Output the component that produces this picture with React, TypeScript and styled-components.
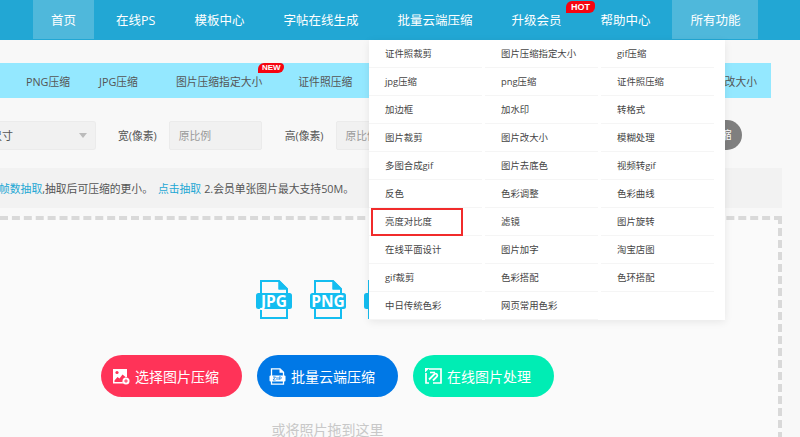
import { createGlobalStyle, styled } from "styled-components";

const GlobalStyle = createGlobalStyle`
  html, body {
    margin: 0;
    padding: 0;
    background: #f8f8f8;
  }
  body {
    font-family: "Open Sans", "Noto Sans CJK SC", sans-serif;
  }
`;

const Page = styled.div`
  position: relative;
  width: 800px;
  height: 437px;
  overflow: hidden;
  background: #f8f8f8;
`;

const Nav = styled.nav`
  display: flex;
  height: 40px;
  padding-left: 30.5px;
  background: #22a7d4;
`;

const NavItem = styled.div<{ $active?: boolean }>`
  position: relative;
  display: flex;
  align-items: center;
  justify-content: center;
  height: 39px;
  margin: 0 ${(p) => (p.$active ? "2.5px" : "0")};
  padding: 0 ${(p) => (p.$active ? "18px" : "19.5px")};
  color: #fff;
  font-size: 12.5px;
  white-space: nowrap;
  background: ${(p) => (p.$active ? "#4fb8db" : "transparent")};
`;

const Badge = styled.span<{ $hot?: boolean }>`
  position: absolute;
  top: ${(p) => (p.$hot ? "1px" : "-10px")};
  right: ${(p) => (p.$hot ? "-14px" : "-22px")};
  width: ${(p) => (p.$hot ? "29px" : "26px")};
  height: ${(p) => (p.$hot ? "12px" : "10px")};
  line-height: ${(p) => (p.$hot ? "12px" : "10px")};
  text-align: center;
  font-family: "Liberation Sans", sans-serif;
  font-size: ${(p) => (p.$hot ? "9px" : "8px")};
  font-weight: 700;
  color: #fff;
  background: #f60410;
  border-radius: 6px 4px 6px 0;
`;

const SubNav = styled.div`
  display: flex;
  align-items: center;
  width: 771px;
  height: 35px;
  margin-top: 23px;
  padding-left: 26px;
  box-sizing: border-box;
  background: #94e8ff;
`;

const SubItem = styled.span<{ $gap?: number; $end?: boolean }>`
  position: relative;
  margin-right: ${(p) => (p.$gap ?? 36)}px;
  margin-left: ${(p) => (p.$end ? "auto" : "0")};
  color: #555;
  font-size: 10.8px;
  white-space: nowrap;
`;

const FormRow = styled.div`
  display: flex;
  align-items: center;
  height: 30px;
  margin-top: 22px;
`;

const Select = styled.div`
  display: flex;
  flex: none;
  align-items: center;
  justify-content: flex-end;
  width: 96px;
  height: 29px;
  padding-right: 8px;
  box-sizing: border-box;
  overflow: hidden;
  color: #555;
  font-size: 11px;
  white-space: nowrap;
  background: #f1f1f1;
  border: 1px solid #ebebeb;
  border-left: 0;
  border-radius: 0 3px 3px 0;
`;

const SelectText = styled.span`
  flex: none;
  margin-right: 66px;
`;

const Arrow = styled.i`
  flex: none;
  width: 0;
  height: 0;
  border-top: 5px solid #bbb;
  border-left: 4px solid transparent;
  border-right: 4px solid transparent;
`;

const FieldLabel = styled.span<{ $left: number }>`
  flex: none;
  margin-left: ${(p) => p.$left}px;
  margin-right: 12px;
  color: #555;
  font-size: 10.8px;
  white-space: nowrap;
`;

const Input = styled.div`
  flex: none;
  width: 93px;
  height: 29px;
  padding-left: 9px;
  box-sizing: border-box;
  line-height: 27px;
  color: #999;
  font-size: 10.8px;
  background: #f1f1f1;
  border: 1px solid #ebebeb;
  border-radius: 2px;
`;

const StartButton = styled.div`
  flex: none;
  width: 70px;
  height: 30px;
  margin-left: 243px;
  padding-right: 10px;
  box-sizing: border-box;
  line-height: 30px;
  text-align: right;
  color: #fff;
  font-size: 10.8px;
  background: #7f7f7f;
  border-radius: 15px;
`;

const Notice = styled.div`
  display: flex;
  align-items: center;
  justify-content: flex-end;
  width: 782px;
  height: 40px;
  margin-top: 18px;
  padding-right: 428px;
  box-sizing: border-box;
  overflow: hidden;
  color: #555;
  font-size: 10.8px;
  white-space: nowrap;
  background: #f2f2f2;
`;

const NoticeText = styled.span`
  flex: none;
`;

const NoticeLink = styled.span<{ $gap?: boolean }>`
  margin: 0 ${(p) => (p.$gap ? "3px" : "0")} 0 ${(p) => (p.$gap ? "5px" : "0")};
  color: #22a7d4;
`;

const DropZone = styled.div`
  width: 782px;
  height: 260px;
  margin-top: 8px;
  padding: 59px 123px 0 0;
  box-sizing: border-box;
  background: #fafafa;
  border: 4px dashed #d9d9d9;
  border-left: 0;
  border-bottom: 0;
  display: flex;
  flex-direction: column;
  align-items: center;
`;

const FileRow = styled.div`
  display: flex;
  gap: 18px;
  height: 41px;
  margin-left: 1px;
`;

const ButtonRow = styled.div`
  display: flex;
  gap: 15px;
  margin-top: 35px;
`;

const ActionButton = styled.div<{ $color: string }>`
  display: flex;
  align-items: center;
  width: 141px;
  height: 42px;
  padding-left: 12px;
  box-sizing: border-box;
  color: #fff;
  font-size: 14px;
  white-space: nowrap;
  background: ${(p) => p.$color};
  border-radius: 21px;

  svg {
    flex: none;
    margin-right: 5px;
  }
`;

const DropHint = styled.div`
  margin-top: 23px;
  color: #c8c8c8;
  font-size: 14px;
  line-height: 20px;
`;

const Menu = styled.div`
  position: absolute;
  top: 40px;
  left: 369px;
  display: grid;
  grid-template-columns: repeat(3, 113px);
  column-gap: 3px;
  width: 356px;
  height: 280px;
  box-sizing: border-box;
  background: #fff;
  box-shadow: 0 2px 8px rgba(0, 0, 0, 0.08);
`;

const MenuItem = styled.div<{ $empty?: boolean }>`
  position: relative;
  height: 28px;
  padding-left: 16px;
  box-sizing: border-box;
  line-height: 27px;
  color: #444;
  font-size: 9.4px;
  white-space: nowrap;
  border-bottom: ${(p) => (p.$empty ? "0" : "1px solid #f5f5f5")};
`;

const Highlight = styled.span`
  position: absolute;
  top: 0;
  left: 2px;
  width: 92px;
  height: 28px;
  box-sizing: border-box;
  border: 2px solid #f12b2b;
`;

const navItems = ["在线PS", "模板中心", "字帖在线生成", "批量云端压缩"];

const menuItems = [
  "证件照裁剪", "图片压缩指定大小", "gif压缩",
  "jpg压缩", "png压缩", "证件照压缩",
  "加边框", "加水印", "转格式",
  "图片裁剪", "图片改大小", "模糊处理",
  "多图合成gif", "图片去底色", "视频转gif",
  "反色", "色彩调整", "色彩曲线",
  "亮度对比度", "滤镜", "图片旋转",
  "在线平面设计", "图片加字", "淘宝店图",
  "gif裁剪", "色彩搭配", "色环搭配",
  "中日传统色彩", "网页常用色彩", "",
];

const FileIcon = ({ label }: { label: string }) => (
  <svg width="36" height="41" viewBox="0 0 36 41">
    <path d="M5 14V2h18l8 8v4M5 29v10h26V29" fill="none" stroke="#14bdf0" strokeWidth="2" />
    <path d="M23 2v8h8z" fill="#14bdf0" stroke="#14bdf0" strokeWidth="1.5" strokeLinejoin="round" />
    <rect x="0" y="14" width="36" height="16" rx="2.5" fill="#14bdf0" />
    <text
      x="18"
      y="27.5"
      textAnchor="middle"
      fontFamily="'Open Sans', sans-serif"
      fontSize="15.5"
      fontWeight="700"
      fill="#fff"
    >
      {label}
    </text>
  </svg>
);

const PictureIcon = () => (
  <svg width="17" height="17" viewBox="0 0 17 17">
    <path d="M0 1h14v8a4.5 4.5 0 0 0-4 6.5H0z" fill="#fff" />
    <circle cx="4" cy="4.5" r="1.6" fill="#ff3358" />
    <path d="M1.5 12.5l3-3.5 2 1.5 3-4 3 2.5-2.5 3.5-.5 1.5H1.5z" fill="#ff3358" />
    <circle cx="13" cy="13" r="3.5" fill="#fff" />
    <path d="M11.2 13h3.6M13 11.2v3.6" stroke="#ff3358" strokeWidth="1" />
  </svg>
);

const ZipIcon = () => (
  <svg width="17" height="17" viewBox="0 0 17 17">
    <path d="M2.5 8V.8h8.5l3.5 3.5V8M2.5 13v3.2h12V13" fill="none" stroke="#fff" strokeWidth="1.3" />
    <path d="M10.5.8v4h4z" fill="#fff" />
    <rect x="0.5" y="7.5" width="16" height="6" rx="1" fill="#fff" />
    <path d="M4 9h2.5L4 12h2.6M8 9v3M10 12V9h1.8a1 1 0 0 1 0 1.8H10" fill="none" stroke="#0078e6" strokeWidth="0.8" />
  </svg>
);

const EditIcon = () => (
  <svg width="17" height="16" viewBox="0 0 17 16">
    <path d="M4 1h12v14H8M1 5v10h3" fill="none" stroke="#fff" strokeWidth="1.7" />
    <path d="M0 0h4.5L0 4.5z" fill="#fff" />
    <path d="M4 11.5l5.5-5.5a1.8 1.8 0 0 1 2.5 2.5L8 12.5" fill="none" stroke="#fff" strokeWidth="1.8" />
    <path d="M5 4.5h5" stroke="#fff" strokeWidth="1.6" />
  </svg>
);

const App = () => {
  return (
    <Page>
      <GlobalStyle />
      <Nav>
        <NavItem $active>首页</NavItem>
        {navItems.map((item) => (
          <NavItem key={item}>{item}</NavItem>
        ))}
        <NavItem>
          升级会员
          <Badge $hot>HOT</Badge>
        </NavItem>
        <NavItem>帮助中心</NavItem>
        <NavItem $active>所有功能</NavItem>
      </Nav>

      <SubNav>
        <SubItem $gap={29}>PNG压缩</SubItem>
        <SubItem $gap={38}>JPG压缩</SubItem>
        <SubItem>
          图片压缩指定大小
          <Badge>NEW</Badge>
        </SubItem>
        <SubItem>证件照压缩</SubItem>
        <SubItem $end $gap={14}>图片改大小</SubItem>
      </SubNav>

      <FormRow>
        <Select>
          <SelectText>原图尺寸</SelectText>
          <Arrow />
        </Select>
        <FieldLabel $left={22}>宽(像素)</FieldLabel>
        <Input>原比例</Input>
        <FieldLabel $left={23}>高(像素)</FieldLabel>
        <Input>原比例</Input>
        <StartButton>开始压缩</StartButton>
      </FormRow>

      <Notice>
        <NoticeText>
          1.GIF动图可进行<NoticeLink>帧数抽取</NoticeLink>,抽取后可压缩的更小。
          <NoticeLink $gap>点击抽取</NoticeLink>
          2.会员单张图片最大支持50M。
        </NoticeText>
      </Notice>

      <DropZone>
        <FileRow>
          <FileIcon label="JPG" />
          <FileIcon label="PNG" />
          <FileIcon label="GIF" />
        </FileRow>
        <ButtonRow>
          <ActionButton $color="#ff3358">
            <PictureIcon />
            选择图片压缩
          </ActionButton>
          <ActionButton $color="#0078e6">
            <ZipIcon />
            批量云端压缩
          </ActionButton>
          <ActionButton $color="#00edb4">
            <EditIcon />
            在线图片处理
          </ActionButton>
        </ButtonRow>
        <DropHint>或将照片拖到这里</DropHint>
      </DropZone>

      <Menu>
        {menuItems.map((item, i) => (
          <MenuItem key={i} $empty={!item}>
            {item}
            {item === "亮度对比度" && <Highlight />}
          </MenuItem>
        ))}
      </Menu>
    </Page>
  );
};

export default App;
